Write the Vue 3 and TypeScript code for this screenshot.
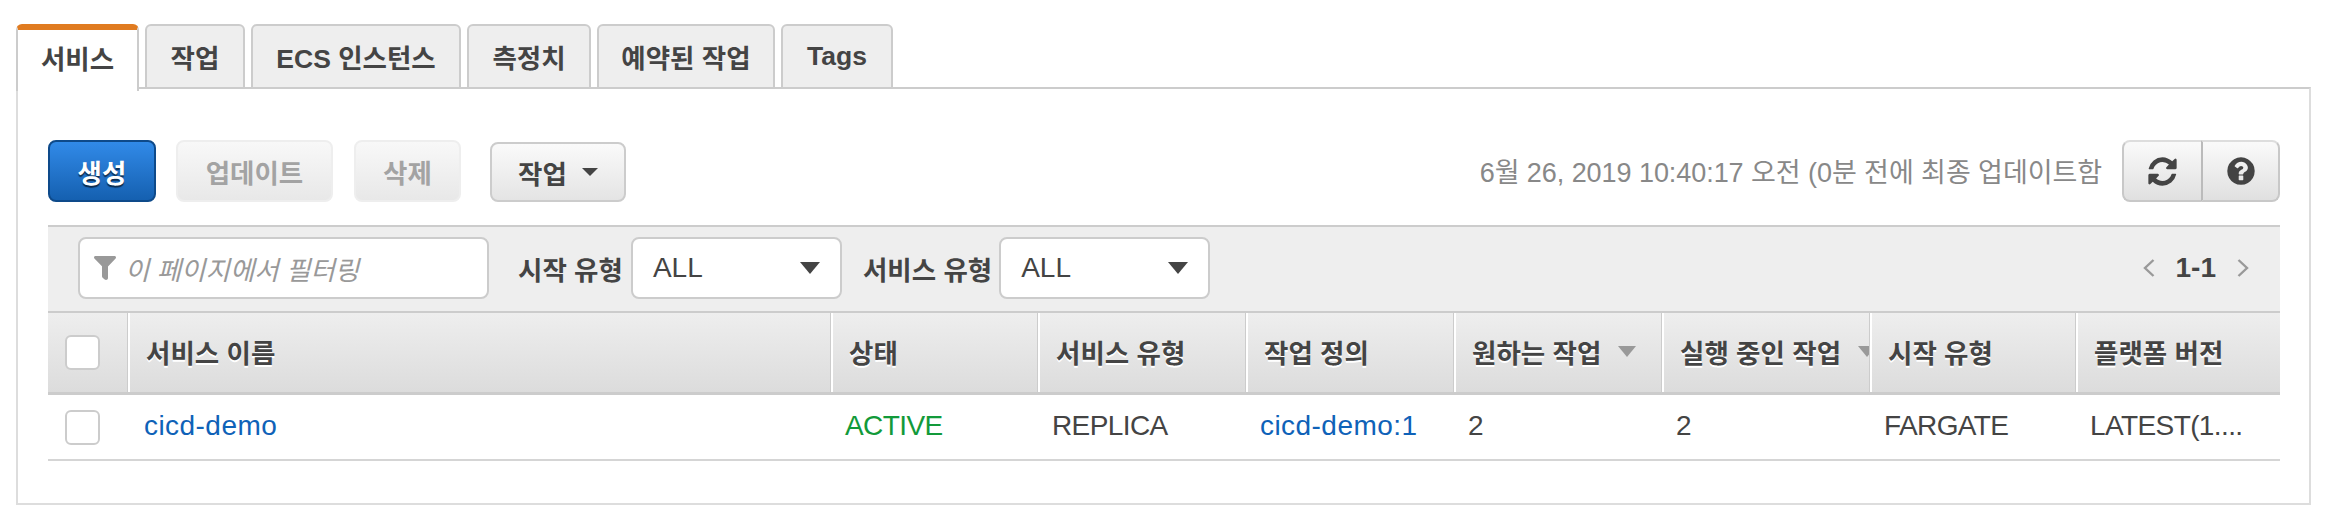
<script setup lang="ts">
const tabs = [
  { label: '서비스', width: 123 },
  { label: '작업', width: 100 },
  { label: 'ECS 인스턴스', width: 210 },
  { label: '측정치', width: 124 },
  { label: '예약된 작업', width: 178 },
  { label: 'Tags', width: 112 },
]

const columns = [
  { label: '서비스 이름' },
  { label: '상태' },
  { label: '서비스 유형' },
  { label: '작업 정의' },
  { label: '원하는 작업', sorted: true },
  { label: '실행 중인 작업', sorted: true },
  { label: '시작 유형' },
  { label: '플랫폼 버전' },
]
</script>

<template>
  <div class="page">
    <nav class="tabs">
      <a
        v-for="(tab, i) in tabs"
        :key="tab.label"
        class="tab"
        :class="{ active: i === 0 }"
        :style="{ width: tab.width + 'px' }"
      >{{ tab.label }}</a>
    </nav>

    <section class="panel">
      <div class="actions">
        <button class="btn primary">생성</button>
        <button class="btn disabled update">업데이트</button>
        <button class="btn disabled remove">삭제</button>
        <button class="btn menu">작업<i class="caret small"></i></button>
        <span class="stamp">6월 26, 2019 10:40:17 오전 (0분 전에 최종 업데이트함</span>
        <div class="icon-group">
          <button class="icon-btn">
            <svg width="33" height="33" viewBox="0 0 1792 1792"><path fill="#444" d="M1639 1056q0 5-1 7-64 268-268 434.500t-478 166.500q-146 0-282.500-55t-243.500-157l-129 129q-19 19-45 19t-45-19-19-45v-448q0-26 19-45t45-19h448q26 0 45 19t19 45-19 45l-137 137q71 66 161 102t187 36q134 0 250-65t186-179q11-17 53-117 8-23 30-23h192q13 0 22.500 9.500t9.500 22.500zm25-800v448q0 26-19 45t-45 19h-448q-26 0-45-19t-19-45 19-45l138-138q-148-137-349-137-134 0-250 65t-186 179q-11 17-53 117-8 23-30 23h-199q-13 0-22.500-9.500t-9.500-22.500v-7q65-268 270-434.500t480-166.500q146 0 284 55.500t245 156.500l130-129q19-19 45-19t45 19 19 45z"/></svg>
          </button>
          <button class="icon-btn">
            <svg width="32" height="32" viewBox="0 0 1792 1792"><path fill="#444" d="M1024 1376v-192q0-14-9-23t-23-9h-192q-14 0-23 9t-9 23v192q0 14 9 23t23 9h192q14 0 23-9t9-23zm256-672q0-88-55.500-163t-138.500-116-170-41q-243 0-371 213-15 24 8 42l132 100q7 6 19 6 16 0 25-12 53-68 86-92 34-24 86-24 48 0 85.500 26t37.500 59q0 38-20 61t-68 45q-63 28-115.500 86.500t-52.500 125.500v36q0 14 9 23t23 9h192q14 0 23-9t9-23q0-19 21.500-49.500t54.500-49.500q32-18 49-28.500t46-35 44.500-48 28-60.500 12.500-81zm384 192q0 209-103 385.500t-279.500 279.500-385.500 103-385.500-103-279.500-279.500-103-385.500 103-385.500 279.500-279.500 385.500-103 385.500 103 279.500 279.500 103 385.500z"/></svg>
          </button>
        </div>
      </div>

      <div class="table">
        <div class="filters">
          <div class="search">
            <svg width="22" height="24" viewBox="0 0 22 24"><path fill="#999" d="M0 1.500C0 .6.600 0 1.500 0h19c.9 0 1.500.6 1.500 1.500 0 .4-.1.7-.4 1L14 10.500V22c0 1.200-1 2-2 2-.5 0-.9-.2-1.300-.5l-1.800-1.500c-.5-.4-.9-1-.9-1.700v-10L.4 2.500C.1 2.200 0 1.900 0 1.500z"/></svg>
            <span>이 페이지에서 필터링</span>
          </div>
          <label class="filter-label first">시작 유형</label>
          <div class="select"><span>ALL</span><i class="caret"></i></div>
          <label class="filter-label second">서비스 유형</label>
          <div class="select"><span>ALL</span><i class="caret"></i></div>
          <div class="pager">
            <svg width="12" height="18" viewBox="0 0 12 18"><path d="M10.500 1 2 9l8.500 8" fill="none" stroke="#999" stroke-width="2.400"/></svg>
            <b>1-1</b>
            <svg width="12" height="18" viewBox="0 0 12 18"><path d="m1.500 1 8.500 8-8.500 8" fill="none" stroke="#999" stroke-width="2.400"/></svg>
          </div>
        </div>

        <div class="grid head">
          <div class="check-cell"><span class="check"></span></div>
          <div v-for="col in columns" :key="col.label" class="th">
            <span>{{ col.label }}</span>
            <i v-if="col.sorted" class="sort"></i>
          </div>
        </div>

        <div class="grid row">
          <div class="check-cell"><span class="check"></span></div>
          <div class="td name"><a>cicd-demo</a></div>
          <div class="td upper status">ACTIVE</div>
          <div class="td upper">REPLICA</div>
          <div class="td"><a>cicd-demo:1</a></div>
          <div class="td">2</div>
          <div class="td">2</div>
          <div class="td upper">FARGATE</div>
          <div class="td upper">LATEST(1....</div>
        </div>
      </div>
    </section>
  </div>
</template>

<style>
html, body { margin: 0; background: #fff; }
</style>

<style scoped>
.page {
  width: 2334px;
  height: 532px;
  box-sizing: border-box;
  padding: 24px 23px 0 16px;
  font-family: "Liberation Sans", "Noto Sans CJK KR", sans-serif;
  font-size: 28px;
  color: #444;
  overflow: hidden;
}

.tabs { display: flex; gap: 6px; height: 65px; position: relative; z-index: 1; }
.tab {
  box-sizing: border-box;
  height: 65px;
  display: flex;
  align-items: center;
  justify-content: center;
  white-space: nowrap;
  background: #eee;
  border: 2px solid #ccc;
  border-radius: 6px 6px 0 0;
  font-weight: 700;
  font-size: 26.500px;
  color: #444;
}
.tab.active {
  height: 67px;
  padding-bottom: 7px;
  background: #fff;
  border-top: 6px solid #e07b20;
  border-bottom: 0;
}

.panel {
  box-sizing: border-box;
  height: 418px;
  margin-top: -2px;
  border: 2px solid #ddd;
  border-top-color: #ccc;
  padding: 51px 29px 0 30px;
}

.actions { display: flex; align-items: center; height: 62px; }
.btn {
  box-sizing: border-box;
  height: 62px;
  border-radius: 8px;
  border: 2px solid #ccc;
  background: linear-gradient(#fafafa, #e4e4e4);
  font: 700 26.500px "Liberation Sans", "Noto Sans CJK KR", sans-serif;
  color: #444;
  padding: 0;
}
.primary {
  width: 108px;
  margin-right: 20px;
  border-color: #0e4a8a;
  background: linear-gradient(#318ae8, #1560b0);
  color: #fff;
  text-shadow: 0 2px 1px rgba(0, 0, 0, .6);
}
.disabled {
  border-color: #eee;
  background: linear-gradient(#f8f8f8, #e8e8e8);
  color: #a3a3a3;
}
.update { width: 157px; margin-right: 21px; }
.remove { width: 107px; margin-right: 29px; }
.menu {
  width: 136px;
  height: 60px;
  margin-top: 2px;
  display: flex;
  align-items: center;
  justify-content: center;
  gap: 15px;
}
.caret {
  display: block;
  width: 0;
  height: 0;
  border-left: 10px solid transparent;
  border-right: 10px solid transparent;
  border-top: 12px solid #444;
}
.caret.small { border-left-width: 8px; border-right-width: 8px; border-top-width: 8px; }

.stamp { margin: 0 20px 2px auto; font-size: 27px; letter-spacing: -.06px; color: #888; }
.icon-group { display: flex; }
.icon-btn {
  box-sizing: border-box;
  width: 79px;
  height: 62px;
  padding: 0;
  display: flex;
  align-items: center;
  justify-content: center;
  background: linear-gradient(#fafafa, #e0e0e0);
  border: 2px solid #c8c8c8;
  border-top-color: #ddd;
}
.icon-btn:first-child { border-radius: 8px 0 0 8px; border-right: 0; }
.icon-btn:last-child { border-radius: 0 8px 8px 0; border-left: 2px solid #bbb; }

.table { margin-top: 23px; }
.filters {
  box-sizing: border-box;
  height: 88px;
  display: flex;
  align-items: center;
  padding: 0 31px 2px 30px;
  background: #eee;
  border-top: 2px solid #ccc;
  border-bottom: 2px solid #ccc;
}
.search {
  box-sizing: border-box;
  width: 411px;
  height: 62px;
  display: flex;
  align-items: center;
  gap: 9px;
  padding-left: 14px;
  background: #fff;
  border: 2px solid #ccc;
  border-radius: 8px;
  font-style: italic;
  font-size: 26.500px;
  color: #999;
}
.filter-label { font-weight: 700; font-size: 26.500px; white-space: nowrap; }
.filter-label.first { margin: 0 8px 0 29px; }
.filter-label.second { margin: 0 7px 0 21px; }
.select {
  box-sizing: border-box;
  width: 211px;
  height: 62px;
  display: flex;
  align-items: center;
  justify-content: space-between;
  padding: 0 20px;
  background: #fff;
  border: 2px solid #ccc;
  border-radius: 8px;
}
.pager { margin-left: auto; display: flex; align-items: center; gap: 21px; }

.grid {
  display: grid;
  grid-template-columns: 80px 703px 207px 208px 208px 208px 208px 206px 204px;
}
.head {
  height: 82px;
  box-sizing: border-box;
  background: linear-gradient(#eee, #dcdcdc);
  border-bottom: 3px solid #ccc;
}
.check-cell { display: flex; align-items: center; padding-left: 17px; }
.check {
  box-sizing: border-box;
  width: 35px;
  height: 35px;
  background: #fff;
  border: 2px solid #ccc;
  border-radius: 6px;
}
.th {
  display: flex;
  align-items: center;
  gap: 17px;
  padding: 0 0 2px 16px;
  overflow: hidden;
  white-space: nowrap;
  border-left: 2px solid #fff;
  box-shadow: -1px 0 0 #ccc;
  font-weight: 700;
  font-size: 26.500px;
  text-shadow: 0 2px 0 #fff;
}
.sort {
  flex: none;
  width: 0;
  height: 0;
  border-left: 9px solid transparent;
  border-right: 9px solid transparent;
  border-top: 11px solid #999;
}
.row {
  height: 66px;
  box-sizing: border-box;
  border-bottom: 2px solid #d5d5d5;
}
.td {
  display: flex;
  align-items: center;
  padding: 0 0 2px 14px;
  white-space: nowrap;
}
.td.name { padding-left: 16px; }
.td a { color: #0f62b8; letter-spacing: .45px; }
.td.upper { letter-spacing: -.6px; }
.status { color: #129a3a; }
</style>
